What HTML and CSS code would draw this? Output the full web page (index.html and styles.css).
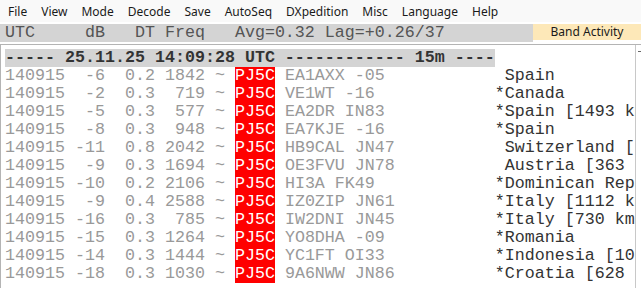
FILE: index.html
```html
<!DOCTYPE html>
<html lang="en">
<head>
    <meta charset="UTF-8">
    <title>Band Activity</title>
    <link rel="stylesheet" href="styles.css">
</head>
<body>
    <!-- Menu -->
    <div class="menubar">
        <span>File</span>
        <span>View</span>
        <span>Mode</span>
        <span>Decode</span>
        <span>Save</span>
        <span>AutoSeq</span>
        <span>DXpedition</span>
        <span>Misc</span>
        <span>Language</span>
        <span>Help</span>
    </div>

    <!-- Cabecera de columnas -->
    <div class="colhead">
        <div class="colnames">UTC     dB   DT Freq   Avg=0.32 Lag=+0.26/37</div>
        <div class="band">Band Activity</div>
    </div>

    <!-- Lista de decodificaciones -->
    <div class="decodes">
        <div class="lines">
            <div class="line sep">----- 25.11.25 14:09:28 UTC ------------ 15m ----</div>
            <div class="line"><span class="decode">140915  -6  0.2 1842 ~ <span class="dx">PJ5C</span> EA1AXX -05</span><span class="country"> Spain</span></div>
            <div class="line"><span class="decode">140915  -2  0.3  719 ~ <span class="dx">PJ5C</span> VE1WT -16</span><span class="country">*Canada</span></div>
            <div class="line"><span class="decode">140915  -5  0.3  577 ~ <span class="dx">PJ5C</span> EA2DR IN83</span><span class="country">*Spain [1493 km]</span></div>
            <div class="line"><span class="decode">140915  -8  0.3  948 ~ <span class="dx">PJ5C</span> EA7KJE -16</span><span class="country">*Spain</span></div>
            <div class="line"><span class="decode">140915 -11  0.8 2042 ~ <span class="dx">PJ5C</span> HB9CAL JN47</span><span class="country"> Switzerland [1298 km]</span></div>
            <div class="line"><span class="decode">140915  -9  0.3 1694 ~ <span class="dx">PJ5C</span> OE3FVU JN78</span><span class="country"> Austria [363 km]</span></div>
            <div class="line"><span class="decode">140915 -10  0.2 2106 ~ <span class="dx">PJ5C</span> HI3A FK49</span><span class="country">*Dominican Republic</span></div>
            <div class="line"><span class="decode">140915  -9  0.4 2588 ~ <span class="dx">PJ5C</span> IZ0ZIP JN61</span><span class="country">*Italy [1112 km]</span></div>
            <div class="line"><span class="decode">140915 -16  0.3  785 ~ <span class="dx">PJ5C</span> IW2DNI JN45</span><span class="country">*Italy [730 km]</span></div>
            <div class="line"><span class="decode">140915 -15  0.3 1264 ~ <span class="dx">PJ5C</span> YO8DHA -09</span><span class="country">*Romania</span></div>
            <div class="line"><span class="decode">140915 -14  0.3 1444 ~ <span class="dx">PJ5C</span> YC1FT OI33</span><span class="country">*Indonesia [10870 km]</span></div>
            <div class="line"><span class="decode">140915 -18  0.3 1030 ~ <span class="dx">PJ5C</span> 9A6NWW JN86</span><span class="country">*Croatia [628 km]</span></div>
        </div>
        <div class="scroll"><span class="arrow"></span></div>
    </div>
</body>
</html>
```

FILE: styles.css
```css
body {
    margin: 0;
    background-color: #fff;
    font-family: "Noto Sans", sans-serif;
    color: #1a1a1a;
    overflow: hidden;
}

/* Barra de menu */
.menubar {
    height: 22px;
    display: flex;
    align-items: center;
    gap: 14px;
    padding-left: 8px;
    background-color: #f9f9f9;
    font-size: 12px;
}

/* Cabecera de columnas */
.colhead {
    display: flex;
    height: 18px;
    margin-top: 2px;
    font-size: 12px;
}

.colnames {
    flex: 1;
    background-color: #d4d4d4;
    padding-left: 5px;
    font-family: "Liberation Mono", monospace;
    font-size: 16.667px;
    line-height: 18px;
    white-space: pre;
    color: #555;
}

.band {
    width: 108px;
    height: 16px;
    background-color: #fde8b8;
    text-align: center;
    line-height: 16px;
}

/* Area de decodificaciones */
.decodes {
    display: flex;
    height: 243px;
    margin-top: 2px;
    border-top: 1px solid #b4b4b4;
    border-left: 1px solid #b4b4b4;
}

.lines {
    flex: 1;
    padding: 3px 0 0 4px;
    overflow: hidden;
    font-family: "Liberation Mono", monospace;
    font-size: 16.667px;
}

.line {
    height: 18px;
    line-height: 18px;
    white-space: pre;
    color: #999;
}

.sep {
    display: inline-block;
    width: 49ch;
    background-color: #d4d4d4;
    color: #333;
    font-weight: bold;
}

.decode {
    display: inline-block;
    width: 49ch;
}

.dx {
    display: inline-block;
    height: 18px;
    background-color: #ff0000;
    color: #fff;
}

.country {
    color: #333;
}

.scroll {
    width: 5px;
    border-left: 1px solid #c8c8c8;
    position: relative;
}

.arrow {
    position: absolute;
    top: 6px;
    left: 2px;
    width: 3px;
    height: 1px;
    background-color: #666;
}
```
